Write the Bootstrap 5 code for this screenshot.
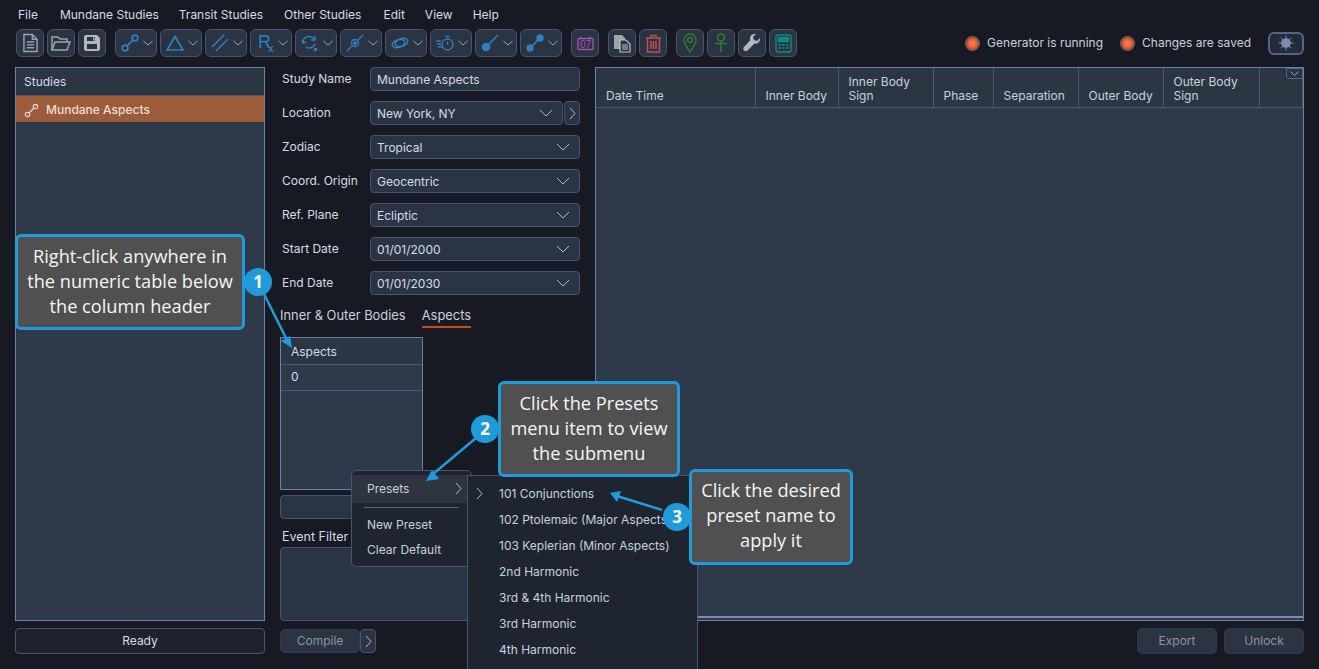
<!DOCTYPE html>
<html lang="en">
<head>
  <meta charset="UTF-8">
  <meta name="viewport" content="width=device-width, initial-scale=1.0">
  <link href="https://cdn.jsdelivr.net/npm/bootstrap@5.3.0/dist/css/bootstrap.min.css" rel="stylesheet">
  <title>Mundane Studies</title>
  <style>
    html, body { height: 100%; }
    body { background: #171a22; color: #d5dce8; font-family: Inter, "Liberation Sans", sans-serif; font-size: 12px; overflow: hidden; position: relative; }
    .app-menu { height: 29px; padding: 0 0 0 18px; }
    .app-menu .nav-link { color: #d5dce8; padding: 0; font-size: 12px; line-height: 29px; }
    .tool-row { height: 28px; padding: 0 15px 0 16px; }
    .tool-set { display: flex; gap: 3px; margin-right: 9px; }
    .tool-btn { width: 28px; height: 28px; padding: 0; border: 1px solid #465472; border-radius: 6px; background: #2a3442; display: flex; align-items: center; justify-content: center; }
    .tool-drop { width: 42px; gap: 4px; padding-left: 2px; }
    .tool-drop .chev { width: 10px; height: 6px; }
    .tool-btn svg { overflow: visible; }
    .status-text { color: #c8d1df; }
    .status-gap { margin-right: 17px; }
    .led-dot { width: 15px; height: 15px; margin-right: 7px; border-radius: 50%; border: 2px solid #7b5b50; background: radial-gradient(circle at 50% 50%, #ff8a58 0, #f0582c 60%, #a83c20 100%); }
    .theme-btn { width: 36px; height: 23px; border: 2px solid #56648a; border-radius: 6px; background: #232a38; display: flex; align-items: center; justify-content: center; padding: 0; }
    .work-area { height: 587px; margin-top: 10px; padding: 0 15px; gap: 15px; }
    .studies-col { width: 250px; flex: none; }
    .filter-col { width: 300px; flex: none; }
    .pane-box { background: #2e3a4a; border: 1px solid #6f80a8; }
    .pane-title { height: 28px; line-height: 27px; padding-left: 8px; background: #2b3643; border-bottom: 1px solid #4b5870; }
    .study-row { height: 26px; background: #9c5c3a; color: #ecdfd6; font-weight: 500; padding-left: 8px; padding-top: 2px; gap: 7px; white-space: nowrap; font-size: 12px; }
    .study-row svg { flex: none; }
    .foot-gap { margin-top: 7px; }
    .flat-btn { height: 26px; padding: 0; background: #1d222c; border: 1px solid #465472; border-radius: 4px; color: #d5dce8; font-size: 12px; }
    .dim-btn { height: 26px; width: 80px; padding: 0; background: #2a3442; border: 1px solid #2f3a4b; border-radius: 5px; color: #8b95a5; font-size: 12px; }
    .field-row { padding-left: 2px; margin-bottom: 10px; height: 24px; }
    .field-label { width: 88px; flex: none; }
    .field-input, .field-select { height: 24px; min-height: 0; padding: 0 6px; font-size: 12px; background-color: #2a3442; border: 1px solid #465472; border-radius: 4px; color: #d5dce8; }
    .field-select { padding-top: 2px; background-image: url("data:image/svg+xml,%3Csvg xmlns='http://www.w3.org/2000/svg' viewBox='0 0 14 8'%3E%3Cpath fill='none' stroke='%23b4bccb' d='M1 1l6 6 6-6'/%3E%3C/svg%3E"); background-size: 14px 8px; background-position: right 9px center; }
    .next-btn { width: 16px; height: 24px; padding: 0; margin-left: 1px; background: #2a3442; border: 1px solid #465472; border-radius: 4px; display: flex; align-items: center; justify-content: center; flex: none; }
    .tab-row { height: 23px; margin-top: 10px; gap: 16px; }
    .tab-row .nav-link { padding: 0; color: #c8d1df; font-size: 12.900px; height: 23px; line-height: 21px; }
    .tab-row .nav-link.active { border-bottom: 2px solid #c4500f; }
    .aspect-box { width: 143px; height: 153px; margin-top: 9px; }
    .aspect-box .pane-title { height: 27px; line-height: 27px; padding-left: 10px; }
    .aspect-cell { height: 26px; line-height: 23px; padding-left: 10px; border-bottom: 1px solid #4b5870; }
    .blank-bar { height: 24px; margin-top: 5px; background: #2a3442; border: 1px solid #465472; border-radius: 4px; }
    .filter-label { height: 20px; margin-top: 8px; padding-left: 2px; line-height: 20px; font-size: 12.500px; }
    .filter-text { height: 74px; background: #2a3442; border: 1px solid #465472; border-radius: 4px; }
    .compile-row { margin-top: 8px; }
    .compile-row .dim-btn { height: 24px; }
    .compile-row .next-btn { margin-left: 0; }
    .action-row { gap: 7px; }
    .result-grid { table-layout: fixed; width: 100%; margin: 0; --bs-table-bg: #2b3643; --bs-table-color: #c8d1df; --bs-table-border-color: #4b5870; }
    .result-grid th { height: 39px; padding: 0 4px 4px 10px; font-weight: 400; vertical-align: bottom; line-height: 14px; border-right: 1px solid #4b5870; border-bottom: 1px solid #4b5870; }
    .corner-btn { position: absolute; right: 0; top: 0; width: 17px; height: 11px; background: #2a3442; border: 1px solid #56648a; border-radius: 0 0 0 3px; display: flex; align-items: center; justify-content: center; padding: 0; }
    .grid-foot { height: 4px; margin-top: auto; border-top: 2px solid #7d8db5; }
    .note-box { position: absolute; background: #505050; border: 3px solid #1f9bdc; border-radius: 6px; color: #f5f5f5; font-family: "Open Sans", "Noto Sans", sans-serif; font-size: 18.200px; line-height: 25px; text-align: center; display: flex; align-items: center; justify-content: center; z-index: 5; white-space: nowrap; padding-bottom: 2px; }
    .note-one { left: 15px; top: 234px; width: 230px; height: 96px; }
    .note-two { left: 498px; top: 381px; width: 182px; height: 96px; }
    .note-three { left: 689px; top: 469px; width: 164px; height: 96px; padding-bottom: 4px; }
    .step-dot { position: absolute; width: 28px; height: 28px; border-radius: 50%; background: #1f9bdc; color: #fff; font-family: "Open Sans", sans-serif; font-weight: 700; font-size: 17px; line-height: 28px; text-align: center; z-index: 7; }
    .arrow-layer { position: absolute; left: 0; top: 0; z-index: 6; pointer-events: none; }
    .ctx-menu { position: absolute; display: block; min-width: 0; margin: 0; padding: 0; background: #1f2530; border: 1px solid #465472; border-radius: 5px; color: #c8d1df; font-size: 12px; z-index: 3; }
    .ctx-main { left: 351px; top: 470px; width: 121px; height: 97px; padding-top: 4px; }
    .ctx-sub { left: 467px; top: 475px; width: 231px; height: 200px; border-radius: 0; z-index: 4; padding-top: 5px; }
    .ctx-main .dropdown-item { color: #c8d1df; font-size: 12px; padding: 0 0 0 15px; height: 25px; line-height: 25px; }
    .ctx-main .dropdown-item.active { background: #2e3440; height: 28px; line-height: 25px; display: flex; justify-content: space-between; align-items: center; padding-right: 9px; padding-bottom: 2px; }
    .ctx-main .dropdown-divider { margin: 4px 12px 4px 12px; border-color: #596478; opacity: 1; }
    .ctx-sub .dropdown-item { color: #c8d1df; font-size: 12px; padding: 0 0 0 31px; height: 26px; line-height: 25px; position: relative; }
    .sub-chev { position: absolute; left: 8px; top: 6px; }
  </style>
</head>
<body>
  <!-- Menu bar -->
  <nav class="nav app-menu">
    <a class="nav-link" style="margin-right:22px" href="#">File</a>
    <a class="nav-link" style="margin-right:20px" href="#">Mundane Studies</a>
    <a class="nav-link" style="margin-right:21px" href="#">Transit Studies</a>
    <a class="nav-link" style="margin-right:22px" href="#">Other Studies</a>
    <a class="nav-link" style="margin-right:20px" href="#">Edit</a>
    <a class="nav-link" style="margin-right:20px" href="#">View</a>
    <a class="nav-link" href="#">Help</a>
  </nav>

  <!-- Toolbar -->
  <div class="d-flex align-items-center tool-row">
    <div class="tool-set">
      <button class="btn tool-btn"><svg width="15" height="20" viewBox="0 0 16 20" fill="none" stroke="#9ea3a8" stroke-width="1.500"><path d="M1 1h9l5 5v13H1z"/><path d="M10 1v5h5"/><path d="M4 9h8M4 12h8M4 15h8"/></svg></button>
      <button class="btn tool-btn"><svg width="20" height="17" viewBox="0 0 20 17" fill="none" stroke="#9ea3a8" stroke-width="1.500"><path d="M1 15V2h6l2 2h7v3"/><path d="M1 15l3-8h15l-3 8z"/></svg></button>
      <button class="btn tool-btn"><svg width="18" height="18" viewBox="0 0 18 18"><path fill="#b4b8bd" d="M1 3a2 2 0 0 1 2-2h11l3 3v11a2 2 0 0 1-2 2H3a2 2 0 0 1-2-2z"/><path fill="#2a3442" d="M4 3h8v4H4zM4 10h10v5H4z"/><path fill="#b4b8bd" d="M10 3.500h1.500V6.500H10z"/></svg></button>
    </div>
    <div class="tool-set">
      <button class="btn tool-btn tool-drop"><svg width="18" height="18" viewBox="0 0 18 18" fill="none" stroke="#2f7fc1" stroke-width="1.700"><circle cx="4" cy="14" r="2.900"/><circle cx="14" cy="4" r="2.900"/><path d="M6 12l6-6"/></svg><svg class="chev" viewBox="0 0 10 6" fill="none" stroke="#9aa3b3"><path d="M.5 1l4.500 4 4.500-4"/></svg></button>
      <button class="btn tool-btn tool-drop"><svg width="18" height="16" viewBox="0 0 18 16" fill="none" stroke="#2f7fc1" stroke-width="1.700"><path d="M9 1.500L17 15H1z"/></svg><svg class="chev" viewBox="0 0 10 6" fill="none" stroke="#9aa3b3"><path d="M.5 1l4.500 4 4.500-4"/></svg></button>
      <button class="btn tool-btn tool-drop"><svg width="18" height="18" viewBox="0 0 18 18" fill="none" stroke="#2f7fc1" stroke-width="1.500"><path d="M1 13L13 1M5 17L17 5"/></svg><svg class="chev" viewBox="0 0 10 6" fill="none" stroke="#9aa3b3"><path d="M.5 1l4.500 4 4.500-4"/></svg></button>
      <button class="btn tool-btn tool-drop"><svg width="18" height="20" viewBox="0 0 18 20" fill="#2f7fc1"><text x="2" y="15" font-family="Liberation Sans, sans-serif" font-size="18">R<tspan dx="-3" dy="4" font-size="10" font-weight="700">x</tspan></text></svg><svg class="chev" viewBox="0 0 10 6" fill="none" stroke="#9aa3b3"><path d="M.5 1l4.500 4 4.500-4"/></svg></button>
      <button class="btn tool-btn tool-drop"><svg width="18" height="18" viewBox="0 0 18 18" fill="none" stroke="#2f7fc1" stroke-width="1.500"><path d="M2 8a6 6 0 0 1 10-4l2 2"/><path d="M14 2v4h-4"/><path d="M14 10a6 6 0 0 1-9 3"/><path d="M1 6l1 3 3-1"/><circle cx="14.500" cy="15.500" r="1.800" fill="#2f7fc1" stroke="none"/></svg><svg class="chev" viewBox="0 0 10 6" fill="none" stroke="#9aa3b3"><path d="M.5 1l4.500 4 4.500-4"/></svg></button>
      <button class="btn tool-btn tool-drop"><svg width="18" height="18" viewBox="0 0 18 18" fill="none" stroke="#2f7fc1" stroke-width="1.300"><circle cx="9" cy="9" r="3.500"/><circle cx="9" cy="9" r="1.300" fill="#2f7fc1"/><path d="M1 17l5-5M12 6l5-5"/></svg><svg class="chev" viewBox="0 0 10 6" fill="none" stroke="#9aa3b3"><path d="M.5 1l4.500 4 4.500-4"/></svg></button>
      <button class="btn tool-btn tool-drop"><svg width="18" height="14" viewBox="0 0 18 14" fill="none" stroke="#2f7fc1" stroke-width="1.500"><ellipse cx="7.500" cy="7.500" rx="6.500" ry="3.800" transform="rotate(-18 7.500 7.500)"/><ellipse cx="10.500" cy="6.500" rx="6.500" ry="3.800" transform="rotate(-18 10.500 6.500)"/></svg><svg class="chev" viewBox="0 0 10 6" fill="none" stroke="#9aa3b3"><path d="M.5 1l4.500 4 4.500-4"/></svg></button>
      <button class="btn tool-btn tool-drop"><svg width="18" height="16" viewBox="0 0 18 16" fill="none" stroke="#2f7fc1" stroke-width="1.300"><circle cx="11.500" cy="9.500" r="5.500"/><path d="M11.500 6.500v3M9.500 1.500h4M0 6h5M1 9h4M2 12h4"/></svg><svg class="chev" viewBox="0 0 10 6" fill="none" stroke="#9aa3b3"><path d="M.5 1l4.500 4 4.500-4"/></svg></button>
      <button class="btn tool-btn tool-drop"><svg width="18" height="18" viewBox="0 0 18 18" fill="#2f7fc1" stroke="#2f7fc1" stroke-width="1.700"><circle cx="5" cy="13" r="4.300" stroke="none"/><path d="M6 12L17 1" fill="none"/></svg><svg class="chev" viewBox="0 0 10 6" fill="none" stroke="#9aa3b3"><path d="M.5 1l4.500 4 4.500-4"/></svg></button>
      <button class="btn tool-btn tool-drop"><svg width="18" height="18" viewBox="0 0 18 18" fill="#2f7fc1" stroke="#2f7fc1" stroke-width="1.700"><circle cx="4" cy="14" r="3.700" stroke="none"/><circle cx="14" cy="4" r="3.700" stroke="none"/><path d="M4 14L14 4" fill="none"/></svg><svg class="chev" viewBox="0 0 10 6" fill="none" stroke="#9aa3b3"><path d="M.5 1l4.500 4 4.500-4"/></svg></button>
    </div>
    <div class="tool-set">
      <button class="btn tool-btn"><svg width="17" height="15" viewBox="0 0 17 15"><path fill="none" stroke="#a552b4" stroke-width="1.300" d="M1.500 2.500h14a1 1 0 0 1 .5 1v9a1 1 0 0 1-1 1H2a1 1 0 0 1-1-1v-9zM4 .5v2M13 .5v2"/><text x="8.500" y="12" text-anchor="middle" fill="#a552b4" font-family="Liberation Sans, sans-serif" font-size="10">07</text></svg></button>
    </div>
    <div class="tool-set">
      <button class="btn tool-btn"><svg width="18" height="19" viewBox="0 0 18 19"><path fill="#9ea3a8" d="M1 1h8l3 3v3H7v8H1z"/><path fill="#2a3442" stroke="#c0c4c8" stroke-width="1.200" d="M7 6h6l4 4v8H7z"/><path stroke="#c0c4c8" d="M9 11h6M9 13h6M9 15h6"/></svg></button>
      <button class="btn tool-btn"><svg width="17" height="19" viewBox="0 0 17 19" fill="none" stroke="#c0504d" stroke-width="1.500"><path d="M1 4h15M6 4V1.500h5V4"/><path d="M2.500 4v14h12V4"/><path d="M6 7v8M8.500 7v8M11 7v8"/></svg></button>
    </div>
    <div class="tool-set me-0">
      <button class="btn tool-btn"><svg width="14" height="20" viewBox="0 0 14 20" fill="none" stroke="#2f7d32" stroke-width="1.400"><path d="M7 19C4 14 1 11 1 7a6 6 0 0 1 12 0c0 4-3 7-6 12z"/><circle cx="7" cy="7" r="2.500"/></svg></button>
      <button class="btn tool-btn"><svg width="14" height="20" viewBox="0 0 14 20" fill="none" stroke="#2f7d32" stroke-width="1.500"><circle cx="7" cy="4.500" r="3.500"/><path d="M7 8v11M1 10.500h12"/></svg></button>
      <button class="btn tool-btn"><svg width="18" height="18" viewBox="0 0 18 18"><path fill="#b4b8bd" d="M17 4l-3 3-3-1-1-3 3-3c-3-.5-6 1-6 4 0 1 0 1.500.5 2L1 13c-1 1-1 2.500 0 3.500s2.500 1 3.500 0l7-7c3 1 6-2 5.500-5.500z"/></svg></button>
      <button class="btn tool-btn"><svg width="17" height="19" viewBox="0 0 17 19" fill="none" stroke="#0f8a80" stroke-width="1.400"><rect x="1" y="1" width="15" height="17" rx="2"/><rect x="3.500" y="3.500" width="10" height="4" fill="#0f8a80"/><path stroke-width="1.600" d="M3.500 11h2.500M7.500 11h2M11 11h2.500M3.500 14h2.500M7.500 14h2M11 14h2.500"/></svg></button>
    </div>
    <div class="d-flex align-items-center ms-auto">
      <span class="led-dot"></span><span class="status-text status-gap">Generator is running</span>
      <span class="led-dot"></span><span class="status-text status-gap">Changes are saved</span>
      <button class="btn theme-btn"><svg width="16" height="16" viewBox="0 0 16 16"><circle cx="8" cy="8" r="4.800" fill="#7b8cb0"/><path stroke="#7b8cb0" d="M8 .5v15M.5 8h15M2.700 2.700l10.600 10.600M13.300 2.700L2.700 13.300"/></svg></button>
    </div>
  </div>

  <!-- Main area -->
  <div class="d-flex work-area">
    <div class="d-flex flex-column studies-col">
      <div class="pane-box flex-fill">
        <div class="pane-title">Studies</div>
        <div class="d-flex align-items-center study-row">
          <svg width="15" height="15" viewBox="0 0 15 15" fill="none" stroke="#e4d8d0" stroke-width="1.200"><circle cx="3.500" cy="11.500" r="2.200"/><circle cx="11.500" cy="3.500" r="2.200"/><path d="M5 10l5-5"/></svg>
          Mundane Aspects
        </div>
      </div>
      <button class="btn flat-btn w-100 foot-gap">Ready</button>
    </div>

    <div class="d-flex flex-column filter-col">
      <div class="field-row d-flex align-items-center"><label class="field-label">Study Name</label><input class="form-control field-input" value="Mundane Aspects"></div>
      <div class="field-row d-flex align-items-center"><label class="field-label">Location</label><select class="form-select field-select"><option>New York, NY</option></select><button class="btn next-btn"><svg width="7" height="13" viewBox="0 0 7 13" fill="none" stroke="#b4bccb"><path d="M1 1l5 5.500-5 5.500"/></svg></button></div>
      <div class="field-row d-flex align-items-center"><label class="field-label">Zodiac</label><select class="form-select field-select"><option>Tropical</option></select></div>
      <div class="field-row d-flex align-items-center"><label class="field-label">Coord. Origin</label><select class="form-select field-select"><option>Geocentric</option></select></div>
      <div class="field-row d-flex align-items-center"><label class="field-label">Ref. Plane</label><select class="form-select field-select"><option>Ecliptic</option></select></div>
      <div class="field-row d-flex align-items-center"><label class="field-label">Start Date</label><select class="form-select field-select"><option>01/01/2000</option></select></div>
      <div class="field-row d-flex align-items-center mb-0"><label class="field-label">End Date</label><select class="form-select field-select"><option>01/01/2030</option></select></div>
      <ul class="nav tab-row">
        <li class="nav-item"><a class="nav-link" href="#">Inner &amp; Outer Bodies</a></li>
        <li class="nav-item"><a class="nav-link active" href="#">Aspects</a></li>
      </ul>
      <div class="pane-box aspect-box">
        <div class="pane-title">Aspects</div>
        <div class="aspect-cell">0</div>
      </div>
      <div class="blank-bar"></div>
      <div class="filter-label">Event Filter</div>
      <div class="filter-text"></div>
      <div class="d-flex compile-row">
        <button class="btn dim-btn">Compile</button>
        <button class="btn next-btn"><svg width="7" height="13" viewBox="0 0 7 13" fill="none" stroke="#b4bccb"><path d="M1 1l5 5.500-5 5.500"/></svg></button>
      </div>
    </div>

    <div class="d-flex flex-column flex-fill">
      <div class="pane-box flex-fill d-flex flex-column position-relative">
        <table class="table result-grid">
          <colgroup><col style="width:159px"><col style="width:83px"><col style="width:95px"><col style="width:60px"><col style="width:85px"><col style="width:85px"><col style="width:96px"><col></colgroup>
          <thead>
            <tr><th>Date Time</th><th>Inner Body</th><th>Inner Body Sign</th><th>Phase</th><th>Separation</th><th>Outer Body</th><th>Outer Body Sign</th><th></th></tr>
          </thead>
        </table>
        <button class="btn corner-btn"><svg width="9" height="5" viewBox="0 0 9 5" fill="none" stroke="#9aa3b3"><path d="M.5.500l4 4 4-4"/></svg></button>
        <div class="grid-foot"></div>
      </div>
      <div class="d-flex justify-content-end action-row foot-gap">
        <button class="btn dim-btn">Export</button>
        <button class="btn dim-btn">Unlock</button>
      </div>
    </div>
  </div>

  <!-- Context menus -->
  <div class="dropdown-menu ctx-menu ctx-main">
    <a class="dropdown-item active" href="#">Presets<svg width="7" height="13" viewBox="0 0 7 13" fill="none" stroke="#b4bccb"><path d="M1 1l5 5.500-5 5.500"/></svg></a>
    <hr class="dropdown-divider">
    <a class="dropdown-item" href="#">New Preset</a>
    <a class="dropdown-item" href="#">Clear Default</a>
  </div>
  <div class="dropdown-menu ctx-menu ctx-sub">
    <a class="dropdown-item" href="#"><svg class="sub-chev" width="7" height="13" viewBox="0 0 7 13" fill="none" stroke="#b4bccb"><path d="M1 1l5 5.500-5 5.500"/></svg>101 Conjunctions</a>
    <a class="dropdown-item" href="#">102 Ptolemaic (Major Aspects)</a>
    <a class="dropdown-item" href="#">103 Keplerian (Minor Aspects)</a>
    <a class="dropdown-item" href="#">2nd Harmonic</a>
    <a class="dropdown-item" href="#">3rd &amp; 4th Harmonic</a>
    <a class="dropdown-item" href="#">3rd Harmonic</a>
    <a class="dropdown-item" href="#">4th Harmonic</a>
  </div>

  <!-- Callouts -->
  <svg class="arrow-layer" width="1319" height="669" viewBox="0 0 1319 669">
    <g stroke="#1f9bdc" stroke-width="2.500" fill="#1f9bdc">
      <path d="M264 294L287 340"/>
      <path d="M476 438L433 474"/>
      <path d="M662 510L617 496"/>
    </g>
    <g fill="#1f9bdc">
      <path d="M292 348L281 341 290 336z"/>
      <path d="M426 481L432 470 439 479z"/>
      <path d="M610 493L621 491 617 502z"/>
    </g>
  </svg>
  <div class="note-box note-one"><span>Right-click anywhere in<br>the numeric table below<br>the column header</span></div>
  <div class="note-box note-two"><span>Click the Presets<br>menu item to view<br>the submenu</span></div>
  <div class="note-box note-three"><span>Click the desired<br>preset name to<br>apply it</span></div>
  <div class="step-dot" style="left:244px;top:268px">1</div>
  <div class="step-dot" style="left:471px;top:415px">2</div>
  <div class="step-dot" style="left:663px;top:503px">3</div>

  <script src="https://cdn.jsdelivr.net/npm/bootstrap@5.3.0/dist/js/bootstrap.bundle.min.js"></script>
</body>
</html>
